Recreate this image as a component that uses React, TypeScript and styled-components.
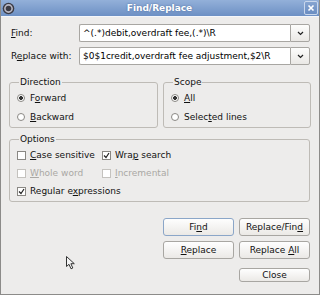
import React from 'react'
import styled, { createGlobalStyle } from 'styled-components'

const Global = createGlobalStyle`
  html, body { margin: 0; padding: 0; background: #edeceb; }
  body { font-family: "DejaVu Sans", "Liberation Sans", sans-serif; font-size: 9px; }
`

const Window = styled.div`
  position: relative;
  width: 320px;
  height: 295px;
  box-sizing: border-box;
  border: 1px solid #8c8b89;
  border-top: none;
  background: #edeceb;
  display: flex;
  flex-direction: column;
  overflow: hidden;
`

const TitleBar = styled.div`
  height: 16px;
  margin: 0 -1px;
  background: linear-gradient(#93b0d9, #6d90c4);
  border-bottom: 1px solid #f4f6fa;
  display: flex;
  align-items: center;
  justify-content: space-between;
  padding: 0 2px;
`

const Title = styled.span`
  color: #fff;
  font-weight: bold;
  font-size: 9px;
  text-shadow: 0 0 2px #4a6a9a;
`

const CloseBox = styled.div`
  width: 12px;
  height: 12px;
  border: 1px solid #c9d7ec;
  border-radius: 2px;
  background: linear-gradient(#86a4d0, #6a8dc2);
  display: flex;
  align-items: center;
  justify-content: center;
`

const Body = styled.div`
  padding: 7px 9px 0 8px;
  display: flex;
  flex-direction: column;
`

const FormRow = styled.div<{ $top?: number }>`
  display: grid;
  grid-template-columns: 70px 1fr;
  align-items: center;
  margin-top: ${p => p.$top ?? 0}px;
`

const Label = styled.label`
  padding-left: 2px;
  color: #111;
`

const Combo = styled.div`
  display: flex;
  height: 18px;
`

const Field = styled.div`
  flex: 1;
  box-sizing: border-box;
  border: 1px solid #a8a6a2;
  border-right: none;
  border-radius: 2px 0 0 2px;
  background: #fff;
  padding: 0 3px;
  line-height: 16px;
  color: #000;
  white-space: nowrap;
  overflow: hidden;
`

const DropButton = styled.div`
  width: 20px;
  box-sizing: border-box;
  border: 1px solid #a8a6a2;
  border-radius: 0 2px 2px 0;
  background: linear-gradient(#fdfdfc, #eae8e5);
  display: flex;
  align-items: center;
  justify-content: center;
`

const GroupRow = styled.div`
  display: grid;
  grid-template-columns: 149px 148px;
  gap: 5px;
  margin-top: 11px;
`

const Group = styled.fieldset<{ $rowGap: number; $cols?: string }>`
  margin: 0;
  padding: 2px 0 2px 7px;
  border: 1px solid #bebbb6;
  border-radius: 3px;
  display: grid;
  grid-template-columns: ${p => p.$cols ?? '1fr'};
  row-gap: ${p => p.$rowGap}px;
  min-width: 0;
`

const Legend = styled.legend`
  padding: 0 1px;
  margin-left: 2px;
  line-height: 12px;
  color: #111;
`

const Option = styled.label<{ $disabled?: boolean; $span?: boolean }>`
  display: flex;
  align-items: center;
  gap: 4px;
  height: 16px;
  white-space: nowrap;
  color: ${p => (p.$disabled ? '#aaa8a4' : '#111')};
  grid-column: ${p => (p.$span ? '1 / -1' : 'auto')};
`

const RadioDot = styled.span<{ $on?: boolean }>`
  width: 8px;
  height: 8px;
  box-sizing: border-box;
  border-radius: 50%;
  border: 1px solid #8a8884;
  background: ${p => (p.$on ? 'radial-gradient(circle, #333 0 1.6px, #fff 2.2px)' : '#fff')};
  margin-right: 1px;
`

const CheckBoxSquare = styled.span<{ $disabled?: boolean }>`
  width: 9px;
  height: 9px;
  box-sizing: border-box;
  border: 1px solid ${p => (p.$disabled ? '#c4c2be' : '#8a8884')};
  background: #fff;
  display: flex;
  align-items: center;
  justify-content: center;
`

const OptionsGroup = styled(Group)`
  margin-top: 5px;
`

const ButtonGrid = styled.div`
  display: grid;
  grid-template-columns: 71px 71px;
  grid-auto-rows: 18px;
  column-gap: 5px;
  row-gap: 5px;
  justify-content: end;
  margin-top: 16px;
`

const Button = styled.div<{ $default?: boolean; $col?: number; $top?: number }>`
  box-sizing: border-box;
  border: 1px solid ${p => (p.$default ? '#8ba6c8' : '#a8a6a2')};
  border-radius: 3px;
  background: linear-gradient(#fefefe, #ebe9e6);
  display: flex;
  align-items: center;
  justify-content: center;
  color: #111;
  white-space: nowrap;
  grid-column: ${p => p.$col ?? 'auto'};
  margin-top: ${p => p.$top ?? 0}px;
`

const Cursor = styled.svg`
  position: absolute;
  left: 65px;
  top: 256px;
`

const U = styled.u`
  text-decoration-thickness: 1px;
  text-underline-offset: 1px;
`

function Check({ on, disabled }: { on?: boolean; disabled?: boolean }) {
  return (
    <CheckBoxSquare $disabled={disabled}>
      {on && (
        <svg width="7" height="7" viewBox="0 0 7 7">
          <path d="M1 3.5 L3 5.5 L6 1" fill="none" stroke="#222" strokeWidth="1.2" />
        </svg>
      )}
    </CheckBoxSquare>
  )
}

function Chevron() {
  return (
    <svg width="7" height="5" viewBox="0 0 7 5">
      <path d="M1 1 L3.5 3.5 L6 1" fill="none" stroke="#222" strokeWidth="1.2" />
    </svg>
  )
}

export default function App() {
  return (
    <>
      <Global />
      <Window>
        <TitleBar>
          <svg width="13" height="13" viewBox="0 0 13 13">
            <circle cx="6.5" cy="6.5" r="5.8" fill="#3b3b45" />
            <circle cx="6.5" cy="6.5" r="3.6" fill="none" stroke="#b9b8c4" strokeWidth="1.6" />
            <circle cx="6.5" cy="6.5" r="1.6" fill="#3b3b45" />
          </svg>
          <Title>Find/Replace</Title>
          <CloseBox>
            <svg width="8" height="8" viewBox="0 0 8 8">
              <path d="M1.5 1.5 L6.5 6.5 M6.5 1.5 L1.5 6.5" stroke="#fff" strokeWidth="1.6" />
            </svg>
          </CloseBox>
        </TitleBar>
        <Body>
          <FormRow>
            <Label><U>F</U>ind:</Label>
            <Combo>
              <Field>^(.*)debit,overdraft fee,(.*)\R</Field>
              <DropButton><Chevron /></DropButton>
            </Combo>
          </FormRow>
          <FormRow $top={5}>
            <Label>R<U>e</U>place with:</Label>
            <Combo>
              <Field>$0$1credit,overdraft fee adjustment,$2\R</Field>
              <DropButton><Chevron /></DropButton>
            </Combo>
          </FormRow>

          <GroupRow>
            <Group $rowGap={3}>
              <Legend>Direction</Legend>
              <Option><RadioDot $on /><span>F<U>o</U>rward</span></Option>
              <Option><RadioDot /><span><U>B</U>ackward</span></Option>
            </Group>
            <Group $rowGap={3}>
              <Legend>Scope</Legend>
              <Option><RadioDot $on /><span><U>A</U>ll</span></Option>
              <Option><RadioDot /><span>Selec<U>t</U>ed lines</span></Option>
            </Group>
          </GroupRow>

          <OptionsGroup $rowGap={2} $cols="85px 1fr">
            <Legend>Options</Legend>
            <Option><Check /><span><U>C</U>ase sensitive</span></Option>
            <Option><Check on /><span>Wra<U>p</U> search</span></Option>
            <Option $disabled><Check disabled /><span><U>W</U>hole word</span></Option>
            <Option $disabled><Check disabled /><span><U>I</U>ncremental</span></Option>
            <Option $span><Check on /><span>Regular e<U>x</U>pressions</span></Option>
          </OptionsGroup>

          <ButtonGrid>
            <Button $default><span>Fi<U>n</U>d</span></Button>
            <Button><span>Replace/Fin<U>d</U></span></Button>
            <Button><span><U>R</U>eplace</span></Button>
            <Button><span>Replace <U>A</U>ll</span></Button>
            <Button $col={2} $top={4}><span>Close</span></Button>
          </ButtonGrid>
        </Body>
        <Cursor width="10" height="14" viewBox="0 0 10 14">
          <path d="M0.5 0.5 L0.5 10.5 L3 8.3 L5 12.8 L6.8 12 L4.9 7.7 L8.3 7.7 Z" fill="#f4f4f4" stroke="#333" strokeWidth="1" strokeLinejoin="round" />
        </Cursor>
      </Window>
    </>
  )
}
